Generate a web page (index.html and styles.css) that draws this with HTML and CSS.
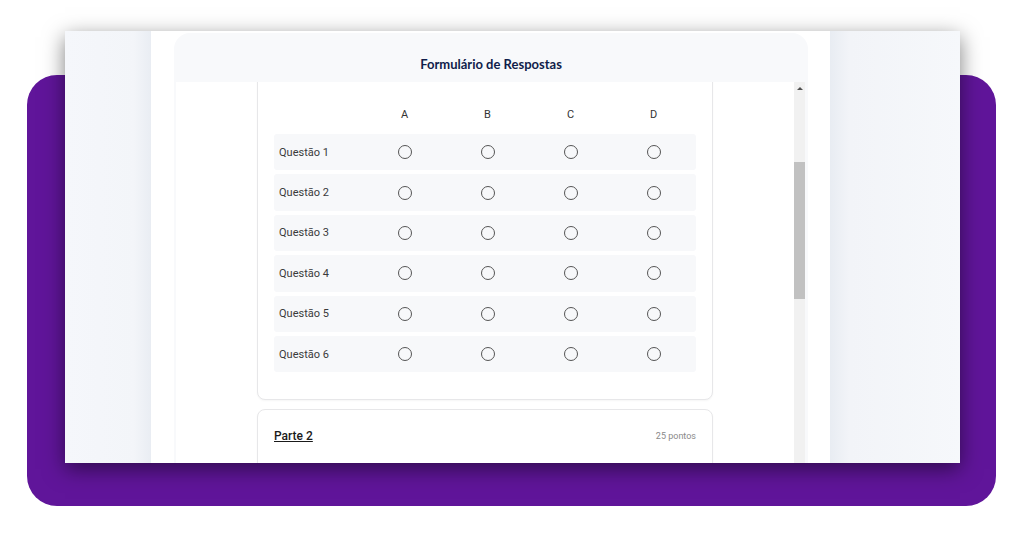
FILE: index.html
```html
<!DOCTYPE html>
<html lang="pt">
<head>
    <meta charset="utf-8">
    <title>Formulário de Respostas</title>
    <link rel="stylesheet" href="styles.css">
</head>
<body>
    <div class="stage">
        <div class="backdrop"></div>
        <div class="window">
            <aside class="side side-left"></aside>
            <main class="center">
                <section class="panel">
                    <h1 class="panel-title">Formulário de Respostas</h1>
                    <div class="panel-body">
                        <div class="scroll">
                            <div class="scroll-inner">
                                <div class="card card-grid">
                                    <div class="grid-head">
                                        <span></span>
                                        <span>A</span>
                                        <span>B</span>
                                        <span>C</span>
                                        <span>D</span>
                                    </div>
                                    <div class="grid-row">
                                        <span class="q-label">Questão 1</span>
                                        <input type="radio" name="q1" class="radio">
                                        <input type="radio" name="q1" class="radio">
                                        <input type="radio" name="q1" class="radio">
                                        <input type="radio" name="q1" class="radio">
                                    </div>
                                    <div class="grid-row">
                                        <span class="q-label">Questão 2</span>
                                        <input type="radio" name="q2" class="radio">
                                        <input type="radio" name="q2" class="radio">
                                        <input type="radio" name="q2" class="radio">
                                        <input type="radio" name="q2" class="radio">
                                    </div>
                                    <div class="grid-row">
                                        <span class="q-label">Questão 3</span>
                                        <input type="radio" name="q3" class="radio">
                                        <input type="radio" name="q3" class="radio">
                                        <input type="radio" name="q3" class="radio">
                                        <input type="radio" name="q3" class="radio">
                                    </div>
                                    <div class="grid-row">
                                        <span class="q-label">Questão 4</span>
                                        <input type="radio" name="q4" class="radio">
                                        <input type="radio" name="q4" class="radio">
                                        <input type="radio" name="q4" class="radio">
                                        <input type="radio" name="q4" class="radio">
                                    </div>
                                    <div class="grid-row">
                                        <span class="q-label">Questão 5</span>
                                        <input type="radio" name="q5" class="radio">
                                        <input type="radio" name="q5" class="radio">
                                        <input type="radio" name="q5" class="radio">
                                        <input type="radio" name="q5" class="radio">
                                    </div>
                                    <div class="grid-row">
                                        <span class="q-label">Questão 6</span>
                                        <input type="radio" name="q6" class="radio">
                                        <input type="radio" name="q6" class="radio">
                                        <input type="radio" name="q6" class="radio">
                                        <input type="radio" name="q6" class="radio">
                                    </div>
                                </div>
                                <div class="card card-part">
                                    <div class="part-head">
                                        <span class="part-title">Parte 2</span>
                                        <span class="part-points">25 pontos</span>
                                    </div>
                                </div>
                            </div>
                        </div>
                        <div class="scrollbar">
                            <span class="scroll-arrow"></span>
                            <span class="scroll-thumb"></span>
                        </div>
                    </div>
                </section>
            </main>
            <aside class="side side-right"></aside>
        </div>
    </div>
</body>
</html>
```

FILE: styles.css
```css
body {
    margin: 0;
    padding: 0;
    background: #fff;
    font-family: Roboto, "Liberation Sans", sans-serif;
}

.stage {
    position: relative;
    width: 1024px;
    height: 536px;
    overflow: hidden;
}

.backdrop {
    margin: 75px 28px 0 27px;
    height: 431px;
    border-radius: 30px;
    background: #60159a;
}

/* screenshot window laid over the purple block */
.window {
    position: absolute;
    left: 65px;
    top: 31px;
    width: 895px;
    height: 432px;
    display: flex;
    overflow: hidden;
    background: #fff;
    box-shadow: 0 6px 20px rgba(0, 0, 0, 0.5);
}

.side {
    flex: none;
}

.side-left {
    width: 86px;
    background: linear-gradient(to right, #f5f7fb 0%, #f3f5f9 80%, #e9edf3 100%);
}

.side-right {
    width: 130px;
    background: linear-gradient(to right, #e8ecf2 0%, #f2f4f8 15%, #f6f8fb 100%);
}

.center {
    width: 679px;
    flex: none;
    box-sizing: border-box;
    padding: 2px 22px 0 23px;
    display: flex;
}

.panel {
    width: 634px;
    display: flex;
    flex-direction: column;
    background: #f8f9fb;
    border-radius: 16px 16px 0 0;
}

.panel-title {
    margin: 0;
    padding: 23px 0 9px;
    font-family: Lato, "Open Sans", sans-serif;
    font-size: 13px;
    line-height: 17px;
    font-weight: 700;
    color: #101d4a;
    text-align: center;
}

.panel-body {
    flex: 1;
    display: flex;
    margin: 0 3px 0 2px;
    background: #fff;
    overflow: hidden;
}

.scroll {
    flex: 1;
    overflow: hidden;
}

.scroll-inner {
    margin-top: -12px;
}

.scrollbar {
    width: 11px;
    flex: none;
    display: flex;
    flex-direction: column;
    align-items: center;
    background: #f1f1f1;
}

.scroll-arrow {
    margin-top: 5px;
    width: 0;
    height: 0;
    border-left: 3px solid transparent;
    border-right: 3px solid transparent;
    border-bottom: 3px solid #505050;
}

.scroll-thumb {
    margin-top: 72px;
    width: 100%;
    height: 137px;
    background: #c1c1c1;
}

.card {
    box-sizing: border-box;
    width: 456px;
    margin: 0 auto;
    border: 1px solid #e7e7e9;
    border-radius: 8px;
    background: #fff;
    box-shadow: 0 1px 2px rgba(0, 0, 0, 0.04);
}

.card-grid {
    padding: 23px 16px 27px;
}

.grid-head,
.grid-row {
    display: grid;
    grid-template-columns: 89px repeat(4, 83px);
    align-items: center;
    justify-items: center;
}

.grid-head {
    height: 40px;
    font-size: 11px;
    color: #333;
}

.grid-row {
    height: 36.4px;
    margin-bottom: 4px;
    background: #f7f8fa;
    border-radius: 3px;
}

.grid-row:last-child {
    margin-bottom: 0;
}

.q-label {
    justify-self: start;
    padding-left: 5px;
    font-size: 11px;
    color: #3a3a3a;
}

.radio {
    appearance: none;
    -webkit-appearance: none;
    margin: 0;
    width: 14px;
    height: 14px;
    box-sizing: border-box;
    border: 1.3px solid #555;
    border-radius: 50%;
    background: transparent;
}

.card-part {
    margin-top: 9px;
    padding: 16px 16px 40px;
}

.part-head {
    display: flex;
    justify-content: space-between;
    align-items: center;
    height: 19px;
}

.part-title {
    font-size: 12px;
    font-weight: 500;
    color: #1a1a1a;
    text-decoration: underline;
}

.part-points {
    font-size: 9px;
    color: #8a8a8a;
}
```
